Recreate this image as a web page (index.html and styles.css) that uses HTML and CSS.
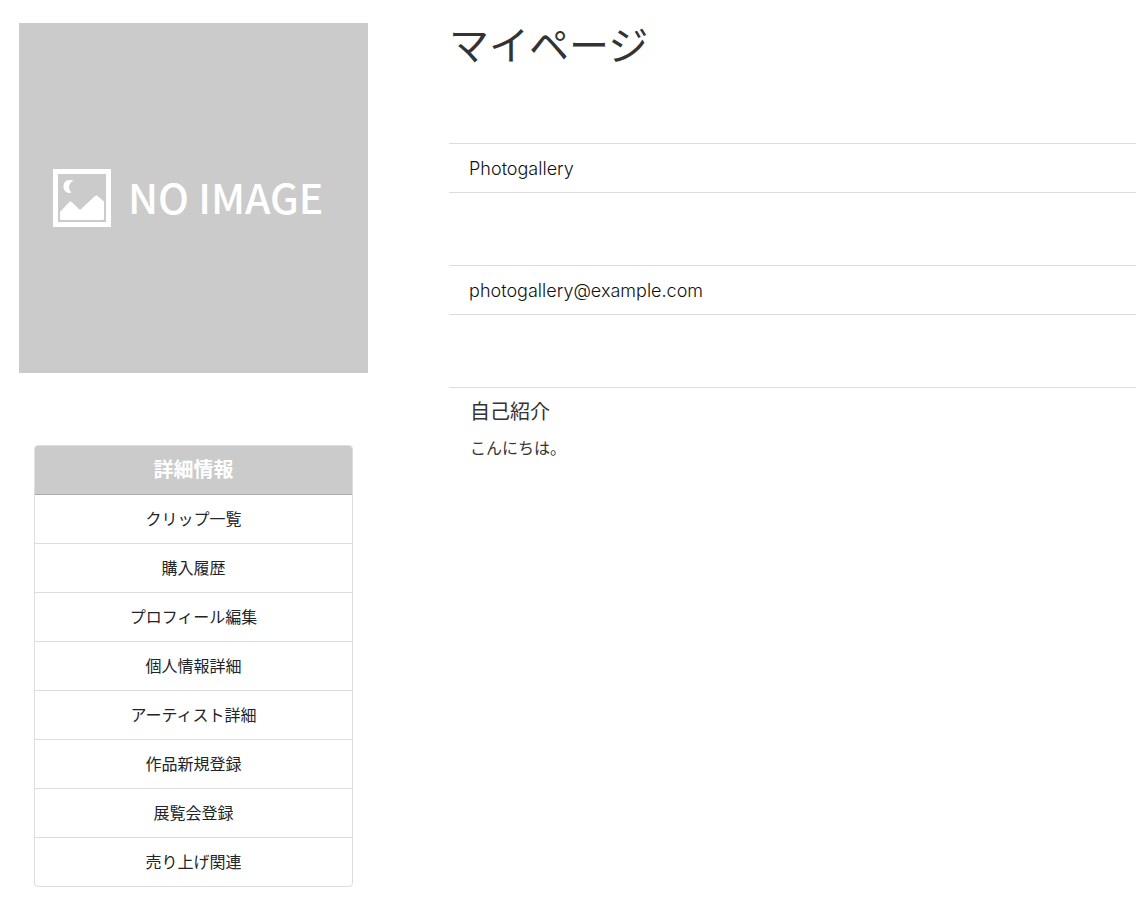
FILE: index.html
```html
<!DOCTYPE html>
<html lang="ja">
<head>
<meta charset="utf-8">
<title>マイページ</title>
<link rel="stylesheet" href="styles.css">
</head>
<body>
<div class="page">
  <aside class="sidebar">
    <div class="avatar">
      <svg class="avatar-icon" viewBox="0 0 58 58" aria-hidden="true">
        <path fill="#fff" fill-rule="evenodd" d="M0 0h58v58H0zM5 5v48h48V5z"/>
        <path fill="#fff" d="M21 11.800C13.500 9 10.500 13.500 10.500 17.500C10.500 22 14 25 18.500 23.500C14.500 20 15.500 13.500 21 11.800z"/>
        <path fill="#fff" d="M7 43L16.500 32.800Q17.500 32 18.500 32.800L27 41L42 27Q43.300 26 44.500 27L51 32.500V49.500Q51 51 49.500 51H8.500Q7 51 7 49.500z"/>
      </svg>
      <span class="avatar-text">NO IMAGE</span>
    </div>
    <nav class="menu" aria-labelledby="menu-title">
      <h2 class="menu-title" id="menu-title">詳細情報</h2>
      <a class="menu-item" href="#">クリップ一覧</a>
      <a class="menu-item" href="#">購入履歴</a>
      <a class="menu-item" href="#">プロフィール編集</a>
      <a class="menu-item" href="#">個人情報詳細</a>
      <a class="menu-item" href="#">アーティスト詳細</a>
      <a class="menu-item" href="#">作品新規登録</a>
      <a class="menu-item" href="#">展覧会登録</a>
      <a class="menu-item" href="#">売り上げ関連</a>
    </nav>
  </aside>
  <main class="content">
    <h1 class="title">マイページ</h1>
    <p class="field">Photogallery</p>
    <p class="field">photogallery@example.com</p>
    <section class="intro">
      <h2 class="intro-title">自己紹介</h2>
      <p class="intro-text">こんにちは。</p>
    </section>
  </main>
</div>
</body>
</html>
```

FILE: styles.css
```css
* {
  box-sizing: border-box;
}

body {
  margin: 0;
  background: #fff;
  color: #212529;
  font-family: "Noto Sans CJK JP", sans-serif;
  font-size: 16px;
  line-height: 24px;
}

.page {
  display: grid;
  grid-template-columns: 5fr 11fr;
  padding: 23px 0 20px 19px;
}

.avatar {
  display: flex;
  align-items: center;
  gap: 17px;
  aspect-ratio: 349 / 350;
  padding-left: 34px;
  background: #cbcbcb;
  color: #fff;
}

.avatar-icon {
  flex: none;
  width: 58px;
  height: 58px;
}

.avatar-text {
  padding-bottom: 4px;
  font-size: 41px;
  line-height: 56px;
  font-weight: 500;
  white-space: nowrap;
}

.menu {
  display: flex;
  flex-direction: column;
  margin: 72px 15px 0;
  border: 1px solid #dcdddd;
  border-radius: 4px;
  overflow: hidden;
  text-align: center;
}

.menu-title {
  margin: -1px -1px 0;
  padding: 11px 20px 13px;
  border-bottom: 1px solid #aaa;
  background: #cbcbcb;
  color: #fff;
  font-size: 20px;
  line-height: 25px;
  font-weight: 700;
}

.menu-item {
  padding: 11px 20px 13px;
  color: #212529;
  text-decoration: none;
}

.menu-item + .menu-item {
  border-top: 1px solid #dcdddd;
}

.content {
  min-width: 0;
  padding-left: 81px;
}

.title {
  margin: 0 0 80px;
  color: #333;
  font-size: 40px;
  line-height: 40px;
  font-weight: 400;
}

.field {
  margin: 0 0 72px;
  padding: 13px 20px 11px;
  border: 1px solid #dcdddd;
  border-width: 1px 0;
  color: #111;
  font-family: Inter, sans-serif;
  font-size: 18px;
  font-weight: 300;
}

.intro {
  padding: 11px 21px;
  border-top: 1px solid #dcdddd;
  color: #333;
}

.intro-title {
  margin: 0 0 12px;
  font-size: 20px;
  line-height: 24px;
  font-weight: 400;
}

.intro-text {
  margin: 0;
}
```
